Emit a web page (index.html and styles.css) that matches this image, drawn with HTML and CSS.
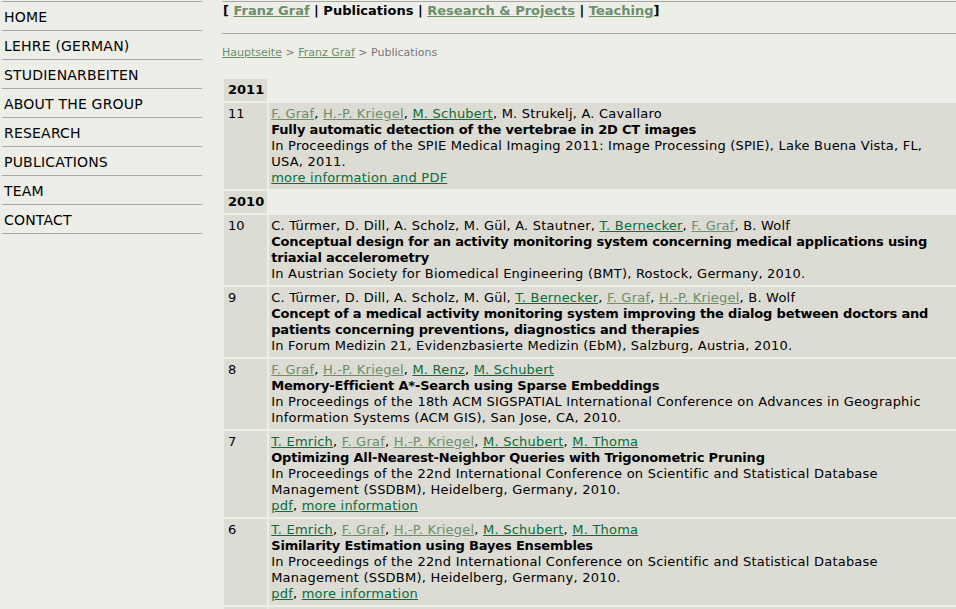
FILE: index.html
```html
<!DOCTYPE html>
<html>
<head>
<meta charset="utf-8">
<title>Publications - Franz Graf</title>
<link rel="stylesheet" href="styles.css">
</head>
<body>
<div class="page">
  <nav class="sidebar">
    <ul class="menu">
      <li><a href="#">HOME</a></li>
      <li><a href="#">LEHRE (GERMAN)</a></li>
      <li><a href="#">STUDIENARBEITEN</a></li>
      <li><a href="#">ABOUT THE GROUP</a></li>
      <li><a href="#">RESEARCH</a></li>
      <li><a href="#">PUBLICATIONS</a></li>
      <li><a href="#">TEAM</a></li>
      <li><a href="#">CONTACT</a></li>
    </ul>
  </nav>
  <main class="content">
    <div class="topnav">[ <a class="v" href="#">Franz Graf</a> | Publications | <a class="v" href="#">Research &amp; Projects</a> | <a class="v" href="#">Teaching</a>]</div>
    <div class="crumbs"><a class="v" href="#">Hauptseite</a> &gt; <a class="v" href="#">Franz Graf</a> &gt; Publications</div>
    <table class="pubs">
      <tr class="yearrow"><td class="year">2011</td><td></td></tr>
      <tr>
        <td class="num">11</td>
        <td class="entry"><a class="v" href="#">F. Graf</a>, <a class="v" href="#">H.-P. Kriegel</a>, <a href="#">M. Schubert</a>, M. Strukelj, A. Cavallaro<br>
        <b>Fully automatic detection of the vertebrae in 2D CT images</b><br>
        In Proceedings of the SPIE Medical Imaging 2011: Image Processing (SPIE), Lake Buena Vista, FL, USA, 2011.<br>
        <a href="#">more information and PDF</a></td>
      </tr>
      <tr class="yearrow"><td class="year">2010</td><td></td></tr>
      <tr>
        <td class="num">10</td>
        <td class="entry">C. Türmer, D. Dill, A. Scholz, M. Gül, A. Stautner, <a href="#">T. Bernecker</a>, <a class="v" href="#">F. Graf</a>, B. Wolf<br>
        <b>Conceptual design for an activity monitoring system concerning medical applications using triaxial accelerometry</b><br>
        In Austrian Society for Biomedical Engineering (BMT), Rostock, Germany, 2010.</td>
      </tr>
      <tr>
        <td class="num">9</td>
        <td class="entry">C. Türmer, D. Dill, A. Scholz, M. Gül, <a href="#">T. Bernecker</a>, <a class="v" href="#">F. Graf</a>, <a class="v" href="#">H.-P. Kriegel</a>, B. Wolf<br>
        <b>Concept of a medical activity monitoring system improving the dialog between doctors and patients concerning preventions, diagnostics and therapies</b><br>
        In Forum Medizin 21, Evidenzbasierte Medizin (EbM), Salzburg, Austria, 2010.</td>
      </tr>
      <tr>
        <td class="num">8</td>
        <td class="entry"><a class="v" href="#">F. Graf</a>, <a class="v" href="#">H.-P. Kriegel</a>, <a href="#">M. Renz</a>, <a href="#">M. Schubert</a><br>
        <b>Memory-Efficient A*-Search using Sparse Embeddings</b><br>
        In Proceedings of the 18th ACM SIGSPATIAL International Conference on Advances in Geographic Information Systems (ACM GIS), San Jose, CA, 2010.</td>
      </tr>
      <tr>
        <td class="num">7</td>
        <td class="entry"><a href="#">T. Emrich</a>, <a class="v" href="#">F. Graf</a>, <a class="v" href="#">H.-P. Kriegel</a>, <a href="#">M. Schubert</a>, <a href="#">M. Thoma</a><br>
        <b>Optimizing All-Nearest-Neighbor Queries with Trigonometric Pruning</b><br>
        In Proceedings of the 22nd International Conference on Scientific and Statistical Database Management (SSDBM), Heidelberg, Germany, 2010.<br>
        <a href="#">pdf</a>, <a href="#">more information</a></td>
      </tr>
      <tr>
        <td class="num">6</td>
        <td class="entry"><a href="#">T. Emrich</a>, <a class="v" href="#">F. Graf</a>, <a class="v" href="#">H.-P. Kriegel</a>, <a href="#">M. Schubert</a>, <a href="#">M. Thoma</a><br>
        <b>Similarity Estimation using Bayes Ensembles</b><br>
        In Proceedings of the 22nd International Conference on Scientific and Statistical Database Management (SSDBM), Heidelberg, Germany, 2010.<br>
        <a href="#">pdf</a>, <a href="#">more information</a></td>
      </tr>
      <tr>
        <td class="num">5</td>
        <td class="entry"><a href="#">E. Achtert</a>, <a href="#">T. Bernecker</a>, <a class="v" href="#">H.-P. Kriegel</a>, <a href="#">E. Schubert</a>, <a href="#">A. Zimek</a><br>
        <b>ELKI in Time: ELKI 0.2 for the Performance Evaluation of Distance Measures for Time Series</b><br>
        In Proceedings of the 11th International Symposium on Spatial and Temporal Databases (SSTD), Aalborg, Denmark, 2009.</td>
      </tr>
    </table>
  </main>
</div>
</body>
</html>
```

FILE: styles.css
```css
html, body {
  margin: 0;
  padding: 0;
  background: #eeeee8;
  overflow: hidden;
}

body {
  font-family: "DejaVu Sans", Verdana, sans-serif;
  font-size: 13px;
  line-height: 16px;
  color: #000;
}

.page {
  display: flex;
  align-items: flex-start;
  width: 960px;
}

.sidebar {
  width: 200px;
  flex: none;
  margin: 1px 0 0 2px;
}

.menu {
  list-style: none;
  margin: 0;
  padding: 0;
  border-top: 1px solid #a9a9a4;
  font-size: 14px;
  letter-spacing: 0.2px;
}

.menu li {
  border-bottom: 1px solid #a9a9a4;
  padding: 7px 0 5px 2px;
  line-height: 16px;
}

.menu a {
  color: #000;
  text-decoration: none;
}

.content {
  flex: 1;
  margin-left: 20px;
  min-width: 0;
}

.topnav {
  margin-top: 1px;
  border-top: 1px solid #a9a9a4;
  border-bottom: 1px solid #a9a9a4;
  padding: 1px 0 14px 1px;
  font-weight: bold;
}

.crumbs {
  margin-top: 12px;
  font-size: 11px;
  line-height: 14px;
  color: #777;
}

a {
  color: #0b6b3a;
  text-decoration: underline;
}

a.v {
  color: #6b8e6b;
}

.pubs {
  margin-top: 17px;
  border-spacing: 2px;
  width: 736px;
}

.pubs td {
  vertical-align: top;
  padding: 3px 3px 3px 3px;
}

.pubs .year {
  background: #dcdcd4;
  font-weight: bold;
  width: 35px;
  padding: 3px 3px 3px 4px;
}

.pubs .num {
  background: #dcdcd4;
  padding-left: 4px;
}

.pubs .entry {
  background: #dcdcd4;
  letter-spacing: 0.22px;
  padding-left: 2px;
}

.pubs .entry b {
  letter-spacing: -0.17px;
}
```
